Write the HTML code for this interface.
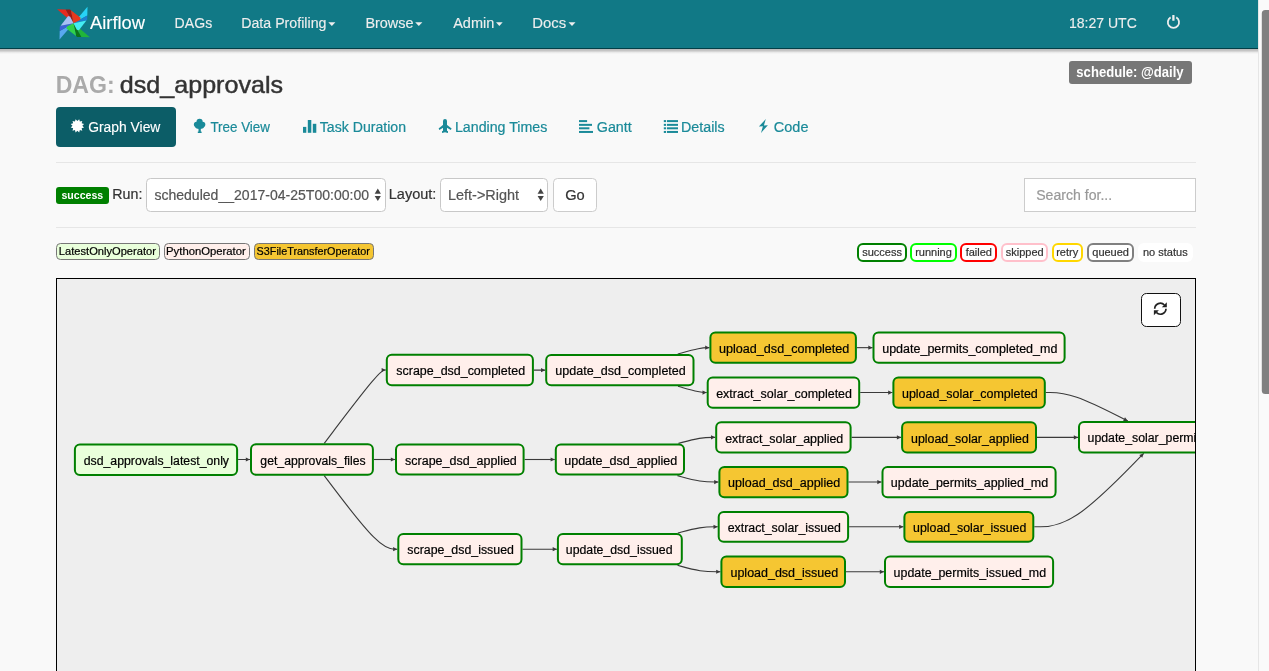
<!DOCTYPE html>
<html><head><meta charset="utf-8"><title>Airflow - DAG: dsd_approvals</title>
<style>
html,body{margin:0;padding:0;width:1269px;height:671px;overflow:hidden;background:#f9f9f9;}
body{position:relative;font-family:"Liberation Sans", sans-serif;}
</style></head><body>
<svg width="1269" height="671" viewBox="0 0 1269 671" style="position:absolute;left:0;top:0;will-change:transform;font-family:'Liberation Sans', sans-serif"><defs><linearGradient id="sh" x1="0" y1="0" x2="0" y2="1"><stop offset="0" stop-color="#000" stop-opacity="0.26"/><stop offset="0.35" stop-color="#000" stop-opacity="0.2"/><stop offset="0.7" stop-color="#000" stop-opacity="0.06"/><stop offset="1" stop-color="#000" stop-opacity="0"/></linearGradient><clipPath id="gclip"><rect x="57" y="279" width="1138" height="400"/></clipPath></defs><rect x="0.00" y="0.00" width="1269.00" height="671.00" rx="0" fill="#f9f9f9"/><rect x="0.00" y="0.00" width="1258.00" height="48.00" rx="0" fill="#117986"/><rect x="0.00" y="48.00" width="1258.00" height="1.00" rx="0" fill="#033f47"/><rect x="0.00" y="49.00" width="1258.00" height="5.00" rx="0" fill="url(#sh)"/><g transform="translate(73.5,23.2)"><g transform="rotate(0)"><polygon points="-16.40,-14.00 -7.80,-13.80 0.00,0.00" fill="#e62a1e"/><polygon points="-7.80,-13.80 -3.60,-13.70 -2.60,-12.90 0.00,0.00" fill="#a3160f"/></g><g transform="rotate(90)"><polygon points="-16.40,-14.00 -7.80,-13.80 0.00,0.00" fill="#27d3f6"/><polygon points="-7.80,-13.80 -3.60,-13.70 -2.60,-12.90 0.00,0.00" fill="#1c7fd0"/></g><g transform="rotate(180)"><polygon points="-16.40,-14.00 -7.80,-13.80 0.00,0.00" fill="#20b53a"/><polygon points="-7.80,-13.80 -3.60,-13.70 -2.60,-12.90 0.00,0.00" fill="#0c7618"/></g><g transform="rotate(270)"><polygon points="-16.40,-14.00 -7.80,-13.80 0.00,0.00" fill="#58a8f0"/><polygon points="-7.80,-13.80 -3.60,-13.70 -2.60,-12.90 0.00,0.00" fill="#3c62d6"/></g><g transform="rotate(0)"><polygon points="-2.60,-12.90 7.10,-5.40 6.50,-3.30 0.00,0.00" fill="#e8381d"/></g><g transform="rotate(90)"><polygon points="-2.60,-12.90 7.10,-5.40 6.50,-3.30 0.00,0.00" fill="#44ecf3"/></g><g transform="rotate(180)"><polygon points="-2.60,-12.90 7.10,-5.40 6.50,-3.30 0.00,0.00" fill="#2fd24b"/></g><g transform="rotate(270)"><polygon points="-2.60,-12.90 7.10,-5.40 6.50,-3.30 0.00,0.00" fill="#a9bff4"/></g></g><text x="90.06" y="29.00" font-size="18" fill="#ffffff" stroke="#ffffff" stroke-width="0.12" textLength="54.89" lengthAdjust="spacingAndGlyphs">Airflow</text><text x="174.64" y="28.20" font-size="14" fill="#eeeeee" stroke="#eeeeee" stroke-width="0.12" textLength="37.56" lengthAdjust="spacingAndGlyphs">DAGs</text><text x="241.24" y="28.20" font-size="14" fill="#eeeeee" stroke="#eeeeee" stroke-width="0.12" textLength="85.18" lengthAdjust="spacingAndGlyphs">Data Profiling</text><polygon points="328.3,22.2 335.4,22.2 331.85,26.0" fill="#eeeeee"/><text x="365.42" y="28.20" font-size="14" fill="#eeeeee" stroke="#eeeeee" stroke-width="0.12" textLength="48.13" lengthAdjust="spacingAndGlyphs">Browse</text><polygon points="415.2,22.2 422.4,22.2 418.79999999999995,26.0" fill="#eeeeee"/><text x="453.17" y="28.20" font-size="14" fill="#eeeeee" stroke="#eeeeee" stroke-width="0.12" textLength="41.07" lengthAdjust="spacingAndGlyphs">Admin</text><polygon points="496.0,22.2 502.7,22.2 499.35,26.0" fill="#eeeeee"/><text x="532.28" y="28.20" font-size="14" fill="#eeeeee" stroke="#eeeeee" stroke-width="0.12" textLength="33.96" lengthAdjust="spacingAndGlyphs">Docs</text><polygon points="568.5,22.2 575.5,22.2 572.0,26.0" fill="#eeeeee"/><text x="1068.93" y="28.00" font-size="14" fill="#eeeeee" stroke="#eeeeee" stroke-width="0.12" textLength="67.90" lengthAdjust="spacingAndGlyphs">18:27 UTC</text><path d="M1170.65,17.35 A5.6,5.6 0 1 0 1176.25,17.35" fill="none" stroke="#eeeeee" stroke-width="1.8" stroke-linecap="butt"/><rect x="1172.25" y="15.0" width="2.3" height="5.8" rx="0.6" fill="#eeeeee"/><rect x="1258.00" y="0.00" width="11.00" height="671.00" rx="0" fill="#fafafa"/><rect x="1258.00" y="0.00" width="1.00" height="671.00" rx="0" fill="#e6e6e6"/><rect x="1261.80" y="10.00" width="13.20" height="384.00" rx="3.5" fill="#808080"/><text x="55.66" y="92.60" font-size="23.5" font-weight="bold" fill="#aaaaaa" textLength="58.96" lengthAdjust="spacingAndGlyphs">DAG:</text><text x="119.85" y="92.60" font-size="24" fill="#333333" stroke="#333333" stroke-width="0.45" textLength="163.16" lengthAdjust="spacingAndGlyphs">dsd_approvals</text><rect x="1069.00" y="61.00" width="123.00" height="23.00" rx="3" fill="#777777"/><text x="1076.34" y="76.50" font-size="14.2" font-weight="bold" fill="#ffffff" textLength="107.33" lengthAdjust="spacingAndGlyphs">schedule: @daily</text><rect x="56.00" y="107.00" width="120.00" height="40.00" rx="4" fill="#0c5d67"/><polygon points="79.19,119.14 79.85,121.56 82.28,120.92 81.64,123.35 84.06,124.01 82.30,125.80 84.06,127.59 81.64,128.25 82.28,130.68 79.85,130.04 79.19,132.46 77.40,130.70 75.61,132.46 74.95,130.04 72.52,130.68 73.16,128.25 70.74,127.59 72.50,125.80 70.74,124.01 73.16,123.35 72.52,120.92 74.95,121.56 75.61,119.14 77.40,120.90" fill="#ffffff"/><text x="88.21" y="131.60" font-size="14" fill="#ffffff" stroke="#ffffff" stroke-width="0.12" textLength="72.16" lengthAdjust="spacingAndGlyphs">Graph View</text><g fill="#1a8a99"><circle cx="199.6" cy="121.9" r="3.1"/><circle cx="196.6" cy="124.4" r="2.7"/><circle cx="202.6" cy="124.4" r="2.7"/><ellipse cx="199.6" cy="126.3" rx="4.6" ry="2.6"/><rect x="198.5" y="127" width="2.3" height="5.5"/><rect x="197.8" y="131.6" width="3.8" height="1.4"/></g><text x="210.40" y="131.70" font-size="14" fill="#1a8a99" stroke="#1a8a99" stroke-width="0.2" textLength="59.56" lengthAdjust="spacingAndGlyphs">Tree View</text><g fill="#1a8a99"><rect x="303" y="126.9" width="3.3" height="5.9"/><rect x="307.8" y="120" width="3.5" height="12.8"/><rect x="312.8" y="123.8" width="3.5" height="9"/></g><text x="319.79" y="131.70" font-size="14" fill="#1a8a99" stroke="#1a8a99" stroke-width="0.2" textLength="86.21" lengthAdjust="spacingAndGlyphs">Task Duration</text><g fill="#1a8a99"><path d="M443,121 Q443,118.9 445,118.9 Q447,118.9 447,121 L447,130.8 L448,131.3 L448,132.9 L445,132.2 L442,132.9 L442,131.3 L443,130.8 Z"/><path d="M443.5,124.6 L438.6,128.6 L439.4,130 L443.5,127.4 Z"/><path d="M446.5,124.6 L451.6,128.6 L450.8,130 L446.5,127.4 Z"/></g><text x="454.94" y="131.70" font-size="14" fill="#1a8a99" stroke="#1a8a99" stroke-width="0.2" textLength="92.36" lengthAdjust="spacingAndGlyphs">Landing Times</text><g fill="#1a8a99"><rect x="579" y="120.1" width="8.1" height="2"/><rect x="579" y="123.85" width="13" height="2"/><rect x="579" y="127.3" width="10.4" height="2"/><rect x="579" y="130.95" width="14" height="2"/></g><text x="596.78" y="131.70" font-size="14" fill="#1a8a99" stroke="#1a8a99" stroke-width="0.2" textLength="35.03" lengthAdjust="spacingAndGlyphs">Gantt</text><g fill="#1a8a99"><rect x="663.8" y="120.1" width="2.3" height="2"/><rect x="667" y="120.1" width="11" height="2"/><rect x="663.8" y="123.85" width="2.3" height="2"/><rect x="667" y="123.85" width="11" height="2"/><rect x="663.8" y="127.3" width="2.3" height="2"/><rect x="667" y="127.3" width="11" height="2"/><rect x="663.8" y="130.95" width="2.3" height="2"/><rect x="667" y="130.95" width="11" height="2"/></g><text x="681.03" y="131.70" font-size="14" fill="#1a8a99" stroke="#1a8a99" stroke-width="0.2" textLength="43.58" lengthAdjust="spacingAndGlyphs">Details</text><polygon points="765.8,119.0 758.9,126.6 762.9,126.3 761.0,133.0 767.9,125.2 763.9,125.6" fill="#1a8a99"/><text x="773.87" y="131.70" font-size="14" fill="#1a8a99" stroke="#1a8a99" stroke-width="0.2" textLength="34.58" lengthAdjust="spacingAndGlyphs">Code</text><rect x="56.00" y="162.00" width="1140.00" height="1.00" rx="0" fill="#e6e6e6"/><rect x="56.00" y="227.00" width="1140.00" height="1.00" rx="0" fill="#e6e6e6"/><rect x="56.00" y="187.00" width="53.00" height="17.00" rx="3" fill="#008000"/><text x="61.43" y="199.20" font-size="10.5" font-weight="bold" fill="#ffffff" textLength="41.81" lengthAdjust="spacingAndGlyphs">success</text><text x="112.33" y="199.20" font-size="14" fill="#333333" stroke="#333333" stroke-width="0.2" textLength="30.07" lengthAdjust="spacingAndGlyphs">Run:</text><rect x="146.50" y="178.50" width="239.00" height="33.00" rx="4" fill="#ffffff" stroke="#c8c8c8" stroke-width="1"/><text x="154.41" y="200.00" font-size="14" fill="#555555" stroke="#555555" stroke-width="0.2" textLength="214.64" lengthAdjust="spacingAndGlyphs">scheduled__2017-04-25T00:00:00</text><polygon points="374.7,193.8 380.9,193.8 377.79999999999995,188.6" fill="#444"/><polygon points="374.7,196.1 380.9,196.1 377.79999999999995,200.9" fill="#444"/><text x="388.81" y="199.20" font-size="14" fill="#333333" stroke="#333333" stroke-width="0.2" textLength="47.62" lengthAdjust="spacingAndGlyphs">Layout:</text><rect x="440.50" y="178.50" width="107.00" height="33.00" rx="4" fill="#ffffff" stroke="#c8c8c8" stroke-width="1"/><text x="448.01" y="200.00" font-size="14" fill="#555555" stroke="#555555" stroke-width="0.2" textLength="71.09" lengthAdjust="spacingAndGlyphs">Left-&gt;Right</text><polygon points="537.6,193.8 543.8,193.8 540.7,188.6" fill="#444"/><polygon points="537.6,196.1 543.8,196.1 540.7,200.9" fill="#444"/><rect x="553.50" y="178.50" width="43.00" height="33.00" rx="4" fill="#ffffff" stroke="#cccccc" stroke-width="1"/><text x="565.16" y="200.00" font-size="14" fill="#333333" stroke="#333333" stroke-width="0.2" textLength="19.55" lengthAdjust="spacingAndGlyphs">Go</text><rect x="1024.50" y="178.50" width="171.00" height="33.00" rx="0" fill="#ffffff" stroke="#cccccc" stroke-width="1"/><text x="1036.17" y="200.00" font-size="14" fill="#999999" stroke="#999999" stroke-width="0.2" textLength="76.01" lengthAdjust="spacingAndGlyphs">Search for...</text><rect x="56.50" y="243.50" width="103.00" height="16.00" rx="4" fill="#e9ffdb" stroke="#777777" stroke-width="1"/><text x="58.89" y="255.20" font-size="11" fill="#000000" stroke="#000000" stroke-width="0.2" textLength="97.00" lengthAdjust="spacingAndGlyphs">LatestOnlyOperator</text><rect x="164.50" y="243.50" width="85.00" height="16.00" rx="4" fill="#ffefeb" stroke="#777777" stroke-width="1"/><text x="166.07" y="255.20" font-size="11" fill="#000000" stroke="#000000" stroke-width="0.2" textLength="79.71" lengthAdjust="spacingAndGlyphs">PythonOperator</text><rect x="254.50" y="243.50" width="119.00" height="16.00" rx="4" fill="#f5c632" stroke="#777777" stroke-width="1"/><text x="256.61" y="255.20" font-size="11" fill="#000000" stroke="#000000" stroke-width="0.2" textLength="113.17" lengthAdjust="spacingAndGlyphs">S3FileTransferOperator</text><rect x="858.00" y="244.00" width="48.00" height="17.00" rx="5" fill="#ffffff" stroke="#008000" stroke-width="2"/><text x="862.18" y="255.80" font-size="11" fill="#333333" stroke="#333333" stroke-width="0.2" textLength="39.74" lengthAdjust="spacingAndGlyphs">success</text><rect x="911.00" y="244.00" width="45.00" height="17.00" rx="5" fill="#ffffff" stroke="#00ff00" stroke-width="2"/><text x="915.14" y="255.80" font-size="11" fill="#333333" stroke="#333333" stroke-width="0.2" textLength="36.70" lengthAdjust="spacingAndGlyphs">running</text><rect x="961.00" y="244.00" width="35.00" height="17.00" rx="5" fill="#ffffff" stroke="#ff0000" stroke-width="2"/><text x="965.63" y="255.80" font-size="11" fill="#333333" stroke="#333333" stroke-width="0.2" textLength="26.30" lengthAdjust="spacingAndGlyphs">failed</text><rect x="1002.00" y="244.00" width="45.00" height="17.00" rx="5" fill="#ffffff" stroke="#ffc0cb" stroke-width="2"/><text x="1005.74" y="255.80" font-size="11" fill="#333333" stroke="#333333" stroke-width="0.2" textLength="37.91" lengthAdjust="spacingAndGlyphs">skipped</text><rect x="1053.00" y="244.00" width="29.00" height="17.00" rx="5" fill="#ffffff" stroke="#ffd700" stroke-width="2"/><text x="1056.15" y="255.80" font-size="11" fill="#333333" stroke="#333333" stroke-width="0.2" textLength="22.00" lengthAdjust="spacingAndGlyphs">retry</text><rect x="1088.00" y="244.00" width="45.00" height="17.00" rx="5" fill="#ffffff" stroke="#808080" stroke-width="2"/><text x="1092.27" y="255.80" font-size="11" fill="#333333" stroke="#333333" stroke-width="0.2" textLength="36.71" lengthAdjust="spacingAndGlyphs">queued</text><rect x="1139.00" y="244.00" width="53.00" height="17.00" rx="5" fill="#ffffff" stroke="#ffffff" stroke-width="2"/><text x="1143.01" y="255.80" font-size="11" fill="#333333" stroke="#333333" stroke-width="0.2" textLength="44.64" lengthAdjust="spacingAndGlyphs">no status</text><rect x="56.50" y="278.50" width="1139.00" height="421.00" rx="0" fill="#eeeeee" stroke="#000000" stroke-width="1"/><rect x="1141.50" y="293.50" width="39.00" height="33.00" rx="5" fill="#ffffff" stroke="#111111" stroke-width="1"/><g fill="none" stroke="#222" stroke-width="1.7"><path d="M1154.7,308.7 A5.6,5.6 0 0 1 1164.4,305.0"/><path d="M1166.0,308.8 A5.6,5.6 0 0 1 1156.3,312.4"/></g><polygon points="1166.8,302.2 1166.8,307.2 1161.8,307.2" fill="#222"/><polygon points="1153.9,310.2 1158.9,310.2 1153.9,315.2" fill="#222"/><g clip-path="url(#gclip)"><g fill="none" stroke="#3a3a3a" stroke-width="1.1"><path d="M238.10,459.51L239.08,459.51C240.07,459.51 242.03,459.50 244.02,459.50C246.00,459.50 248.00,459.50 249.00,459.50L250.00,459.50"/><path d="M324.25,443.30L333.52,431.08C342.80,418.87 361.35,394.43 371.61,382.22C381.87,370.00 383.83,370.00 384.82,370.00L385.80,370.00"/><path d="M373.90,459.50L374.90,459.50C375.90,459.50 377.90,459.50 381.42,459.50C384.93,459.50 389.97,459.50 392.48,459.50L395.00,459.50"/><path d="M324.22,475.70L333.50,487.95C342.78,500.20 361.34,524.70 373.52,536.95C385.70,549.20 391.50,549.20 394.40,549.20L397.30,549.20"/><path d="M533.90,370.14L534.83,370.14C535.77,370.14 537.63,370.15 539.52,370.15C541.40,370.15 543.30,370.15 544.25,370.15L545.20,370.15"/><path d="M524.60,459.50L527.08,459.50C529.57,459.50 534.53,459.50 539.57,459.50C544.60,459.50 549.70,459.50 552.25,459.50L554.80,459.50"/><path d="M522.50,549.20L525.33,549.20C528.17,549.20 533.83,549.20 539.57,549.20C545.30,549.20 551.10,549.20 554.00,549.20L556.90,549.20"/><path d="M677.74,354.00L681.53,352.94C685.33,351.88 692.91,349.77 698.19,348.71C703.47,347.65 706.43,347.65 707.92,347.65L709.40,347.65"/><path d="M678.00,386.30L681.75,387.34C685.50,388.38 693.00,390.47 697.78,391.51C702.57,392.55 704.63,392.55 705.67,392.55L706.70,392.55"/><path d="M678.49,443.40L682.15,442.39C685.82,441.38 693.16,439.37 699.28,438.36C705.40,437.35 710.30,437.35 712.75,437.35L715.20,437.35"/><path d="M677.45,475.60L681.29,476.68C685.13,477.75 692.82,479.90 699.64,480.97C706.47,482.05 712.43,482.05 715.42,482.05L718.40,482.05"/><path d="M677.82,533.10L681.60,532.05C685.38,531.00 692.94,528.90 699.59,527.85C706.23,526.80 711.97,526.80 714.83,526.80L717.70,526.80"/><path d="M677.43,565.30L681.28,566.38C685.12,567.45 692.81,569.60 699.97,570.68C707.13,571.75 713.77,571.75 717.08,571.75L720.40,571.75"/><path d="M856.90,347.65L858.48,347.65C860.07,347.65 863.23,347.65 865.83,347.65C868.43,347.65 870.47,347.65 871.48,347.65L872.50,347.65"/><path d="M860.20,392.55L861.23,392.55C862.27,392.55 864.33,392.55 869.70,392.55C875.07,392.55 883.73,392.55 888.07,392.55L892.40,392.55"/><path d="M851.60,437.39L854.07,437.39C856.53,437.39 861.47,437.40 869.72,437.40C877.97,437.40 889.53,437.40 895.32,437.40L901.10,437.40"/><path d="M848.50,482.05L851.48,482.05C854.47,482.05 860.43,482.05 865.93,482.05C871.43,482.05 876.47,482.05 878.98,482.05L881.50,482.05"/><path d="M849.10,526.80L851.98,526.80C854.87,526.80 860.63,526.80 869.68,526.80C878.73,526.80 891.07,526.80 897.23,526.80L903.40,526.80"/><path d="M846.00,571.79L849.40,571.79C852.80,571.79 859.60,571.80 865.93,571.80C872.27,571.80 878.13,571.80 881.07,571.80L884.00,571.80"/><path d="M1045.80,392.55L1050.13,392.55C1054.47,392.55 1063.13,392.55 1076.80,397.31C1090.47,402.07 1109.14,411.58 1118.48,416.34L1127.81,421.10"/><path d="M1037.00,437.40L1042.80,437.40C1048.60,437.40 1060.20,437.40 1067.03,437.40C1073.87,437.40 1075.93,437.39 1076.97,437.39L1078.00,437.39"/><path d="M1034.30,526.80L1040.55,526.80C1046.80,526.80 1059.30,526.80 1077.53,514.57C1095.76,502.33 1119.72,477.87 1131.70,465.63L1143.68,453.40"/></g><g fill="#3a3a3a"><polygon points="250.00,459.50 245.80,461.60 245.80,457.40"/><polygon points="385.80,370.00 381.60,372.10 381.60,367.90"/><polygon points="395.00,459.50 390.80,461.60 390.80,457.40"/><polygon points="397.30,549.20 393.10,551.30 393.10,547.10"/><polygon points="545.20,370.15 541.00,372.25 541.00,368.05"/><polygon points="554.80,459.50 550.60,461.60 550.60,457.40"/><polygon points="556.90,549.20 552.70,551.30 552.70,547.10"/><polygon points="709.40,347.65 705.20,349.75 705.20,345.55"/><polygon points="706.70,392.55 702.50,394.65 702.50,390.45"/><polygon points="715.20,437.35 711.00,439.45 711.00,435.25"/><polygon points="718.40,482.05 714.20,484.15 714.20,479.95"/><polygon points="717.70,526.80 713.50,528.90 713.50,524.70"/><polygon points="720.40,571.75 716.20,573.85 716.20,569.65"/><polygon points="872.50,347.65 868.30,349.75 868.30,345.55"/><polygon points="892.40,392.55 888.20,394.65 888.20,390.45"/><polygon points="901.10,437.40 896.90,439.50 896.90,435.30"/><polygon points="881.50,482.05 877.30,484.15 877.30,479.95"/><polygon points="903.40,526.80 899.20,528.90 899.20,524.70"/><polygon points="884.00,571.80 879.80,573.90 879.80,569.70"/><polygon points="1127.81,421.10 1123.12,421.06 1125.03,417.32"/><polygon points="1078.00,437.39 1073.80,439.50 1073.80,435.30"/><polygon points="1143.68,453.40 1142.25,457.87 1139.24,454.93"/></g><rect x="74.90" y="444.40" width="162.20" height="30.60" rx="5" fill="#e9ffdb" stroke="#008000" stroke-width="2"/><rect x="251.00" y="444.30" width="121.90" height="30.40" rx="5" fill="#ffefeb" stroke="#008000" stroke-width="2"/><rect x="386.80" y="354.80" width="146.10" height="30.40" rx="5" fill="#ffefeb" stroke="#008000" stroke-width="2"/><rect x="396.00" y="444.40" width="127.60" height="30.20" rx="5" fill="#ffefeb" stroke="#008000" stroke-width="2"/><rect x="398.30" y="534.10" width="123.20" height="30.20" rx="5" fill="#ffefeb" stroke="#008000" stroke-width="2"/><rect x="546.20" y="355.00" width="147.30" height="30.30" rx="5" fill="#ffefeb" stroke="#008000" stroke-width="2"/><rect x="555.80" y="444.40" width="128.20" height="30.20" rx="5" fill="#ffefeb" stroke="#008000" stroke-width="2"/><rect x="557.90" y="534.10" width="123.90" height="30.20" rx="5" fill="#ffefeb" stroke="#008000" stroke-width="2"/><rect x="710.40" y="332.50" width="145.50" height="30.30" rx="5" fill="#f5c632" stroke="#008000" stroke-width="2"/><rect x="707.70" y="377.40" width="151.50" height="30.30" rx="5" fill="#ffefeb" stroke="#008000" stroke-width="2"/><rect x="716.20" y="422.20" width="134.40" height="30.30" rx="5" fill="#ffefeb" stroke="#008000" stroke-width="2"/><rect x="719.40" y="466.90" width="128.10" height="30.30" rx="5" fill="#f5c632" stroke="#008000" stroke-width="2"/><rect x="718.70" y="511.90" width="129.40" height="29.80" rx="5" fill="#ffefeb" stroke="#008000" stroke-width="2"/><rect x="721.40" y="556.60" width="123.60" height="30.30" rx="5" fill="#f5c632" stroke="#008000" stroke-width="2"/><rect x="873.50" y="332.50" width="191.10" height="30.30" rx="5" fill="#ffefeb" stroke="#008000" stroke-width="2"/><rect x="893.40" y="377.40" width="151.40" height="30.30" rx="5" fill="#f5c632" stroke="#008000" stroke-width="2"/><rect x="902.10" y="422.20" width="133.90" height="30.40" rx="5" fill="#f5c632" stroke="#008000" stroke-width="2"/><rect x="882.50" y="466.90" width="173.10" height="30.30" rx="5" fill="#ffefeb" stroke="#008000" stroke-width="2"/><rect x="904.40" y="511.90" width="128.90" height="29.80" rx="5" fill="#f5c632" stroke="#008000" stroke-width="2"/><rect x="885.00" y="556.60" width="168.10" height="30.40" rx="5" fill="#ffefeb" stroke="#008000" stroke-width="2"/><rect x="1079.00" y="422.10" width="161.00" height="30.30" rx="5" fill="#ffefeb" stroke="#008000" stroke-width="2"/></g><g clip-path="url(#gclip)"><text x="83.78" y="464.90" font-size="12" fill="#000000" stroke="#000000" stroke-width="0.2" textLength="145.24" lengthAdjust="spacingAndGlyphs">dsd_approvals_latest_only</text><text x="260.39" y="464.70" font-size="12" fill="#000000" stroke="#000000" stroke-width="0.2" textLength="105.25" lengthAdjust="spacingAndGlyphs">get_approvals_files</text><text x="396.35" y="375.20" font-size="12" fill="#000000" stroke="#000000" stroke-width="0.2" textLength="128.75" lengthAdjust="spacingAndGlyphs">scrape_dsd_completed</text><text x="405.05" y="464.70" font-size="12" fill="#000000" stroke="#000000" stroke-width="0.2" textLength="111.75" lengthAdjust="spacingAndGlyphs">scrape_dsd_applied</text><text x="407.36" y="554.40" font-size="12" fill="#000000" stroke="#000000" stroke-width="0.2" textLength="106.54" lengthAdjust="spacingAndGlyphs">scrape_dsd_issued</text><text x="555.39" y="375.35" font-size="12" fill="#000000" stroke="#000000" stroke-width="0.2" textLength="130.42" lengthAdjust="spacingAndGlyphs">update_dsd_completed</text><text x="564.19" y="464.70" font-size="12" fill="#000000" stroke="#000000" stroke-width="0.2" textLength="113.02" lengthAdjust="spacingAndGlyphs">update_dsd_applied</text><text x="565.80" y="554.40" font-size="12" fill="#000000" stroke="#000000" stroke-width="0.2" textLength="106.69" lengthAdjust="spacingAndGlyphs">update_dsd_issued</text><text x="718.98" y="352.85" font-size="12" fill="#000000" stroke="#000000" stroke-width="0.2" textLength="130.33" lengthAdjust="spacingAndGlyphs">upload_dsd_completed</text><text x="716.17" y="397.75" font-size="12" fill="#000000" stroke="#000000" stroke-width="0.2" textLength="135.83" lengthAdjust="spacingAndGlyphs">extract_solar_completed</text><text x="725.17" y="442.55" font-size="12" fill="#000000" stroke="#000000" stroke-width="0.2" textLength="118.13" lengthAdjust="spacingAndGlyphs">extract_solar_applied</text><text x="727.99" y="487.25" font-size="12" fill="#000000" stroke="#000000" stroke-width="0.2" textLength="112.12" lengthAdjust="spacingAndGlyphs">upload_dsd_applied</text><text x="727.68" y="532.00" font-size="12" fill="#000000" stroke="#000000" stroke-width="0.2" textLength="113.32" lengthAdjust="spacingAndGlyphs">extract_solar_issued</text><text x="730.49" y="576.95" font-size="12" fill="#000000" stroke="#000000" stroke-width="0.2" textLength="107.62" lengthAdjust="spacingAndGlyphs">upload_dsd_issued</text><text x="882.19" y="352.85" font-size="12" fill="#000000" stroke="#000000" stroke-width="0.2" textLength="175.22" lengthAdjust="spacingAndGlyphs">update_permits_completed_md</text><text x="901.99" y="397.75" font-size="12" fill="#000000" stroke="#000000" stroke-width="0.2" textLength="135.81" lengthAdjust="spacingAndGlyphs">upload_solar_completed</text><text x="911.00" y="442.60" font-size="12" fill="#000000" stroke="#000000" stroke-width="0.2" textLength="117.80" lengthAdjust="spacingAndGlyphs">upload_solar_applied</text><text x="890.89" y="487.25" font-size="12" fill="#000000" stroke="#000000" stroke-width="0.2" textLength="157.31" lengthAdjust="spacingAndGlyphs">update_permits_applied_md</text><text x="913.10" y="532.00" font-size="12" fill="#000000" stroke="#000000" stroke-width="0.2" textLength="113.20" lengthAdjust="spacingAndGlyphs">upload_solar_issued</text><text x="893.59" y="577.00" font-size="12" fill="#000000" stroke="#000000" stroke-width="0.2" textLength="152.51" lengthAdjust="spacingAndGlyphs">update_permits_issued_md</text><text x="1087.60" y="442.45" font-size="12" fill="#000000" stroke="#000000" stroke-width="0.2" textLength="142.21" lengthAdjust="spacingAndGlyphs">update_solar_permits_md</text></g></svg>
</body></html>
